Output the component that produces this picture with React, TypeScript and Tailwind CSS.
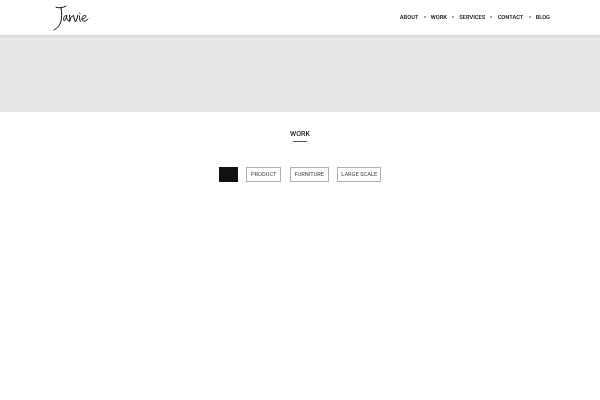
const navItems = ['ABOUT', 'WORK', 'SERVICES', 'CONTACT', 'BLOG'];
const filters = [
  { label: 'PRODUCT', width: 'w-[35px]' },
  { label: 'FURNITURE', width: 'w-[39px]' },
  { label: 'LARGE SCALE', width: 'w-[44px]' },
];

function Logo() {
  return (
    <svg width="36" height="26" viewBox="0 0 36 26" fill="none" stroke="#111" strokeWidth="1" strokeLinecap="round" strokeLinejoin="round" aria-label="Jarvie logo">
      <path d="M3 2.2 C6 3.4 9.5 2.8 13 1.2" />
      <path d="M8 2.5 C9 8 9 13 7.5 18 C6.5 21 3.5 23.5 1 25" />
      <path d="M13.5 10.5 C11.5 10 10.2 12.5 10.7 15.5 C11.7 16.5 13 14 13.7 10.5 C13.6 13 14 16 15.5 16" />
      <path d="M16.5 10 C17 12 17 14 16.7 16.5 C17.2 13.5 18 11 19.5 11" />
      <path d="M20.5 10.5 C21 13 21.7 15 22.5 17 C23.5 14.5 24.5 12.5 25 10" />
      <path d="M26.5 11 C26.3 13 26.5 15 27.5 16.5" />
      <path d="M26.7 8 L26.9 8.4" />
      <path d="M29 14 C31.5 14 33.5 12 32.5 10.5 C31 9.7 28.7 12 29 14.5 C29.5 16.8 32.5 16.8 35 14" />
    </svg>
  );
}

export default function App() {
  return (
    <div className="h-[400px] w-[600px] overflow-hidden bg-white font-['Roboto','Liberation_Sans',sans-serif] text-[#111] [text-rendering:geometricPrecision]">
      <header className="relative z-10 flex h-[35px] items-center justify-between pl-[53px] pr-[50px] shadow-[0_1px_3px_rgba(0,0,0,0.12)]">
        <Logo />
        <nav className="flex transform-gpu items-center text-[5.7px] font-semibold leading-none text-[#222]">
          {navItems.map((item, i) => (
            <div key={item} className="flex items-center">
              {i > 0 && <span className="mx-[5.2px] h-[2px] w-[2px] rounded-full bg-[#888]" />}
              <span className="pt-[2px]">{item}</span>
            </div>
          ))}
        </nav>
      </header>

      <div className="h-[77px] bg-[#e7e7e7]" />

      <section className="flex transform-gpu flex-col items-center pt-[17px]">
        <h2 className="text-[7px] font-medium leading-[10px] text-[#222]">WORK</h2>
        <div className="mt-[2px] h-px w-[14px] bg-[#555]" />

        <div className="mt-[25px] flex items-center gap-[8.5px]">
          <button className="h-[15px] w-[19px] bg-[#111]" />
          {filters.map((f) => (
            <button key={f.label} className={`flex h-[15px] items-center justify-center border border-[#b0b0b0] text-[5.7px] leading-none text-[#444] ${f.width}`}>
              {f.label}
            </button>
          ))}
        </div>
      </section>
    </div>
  );
}
